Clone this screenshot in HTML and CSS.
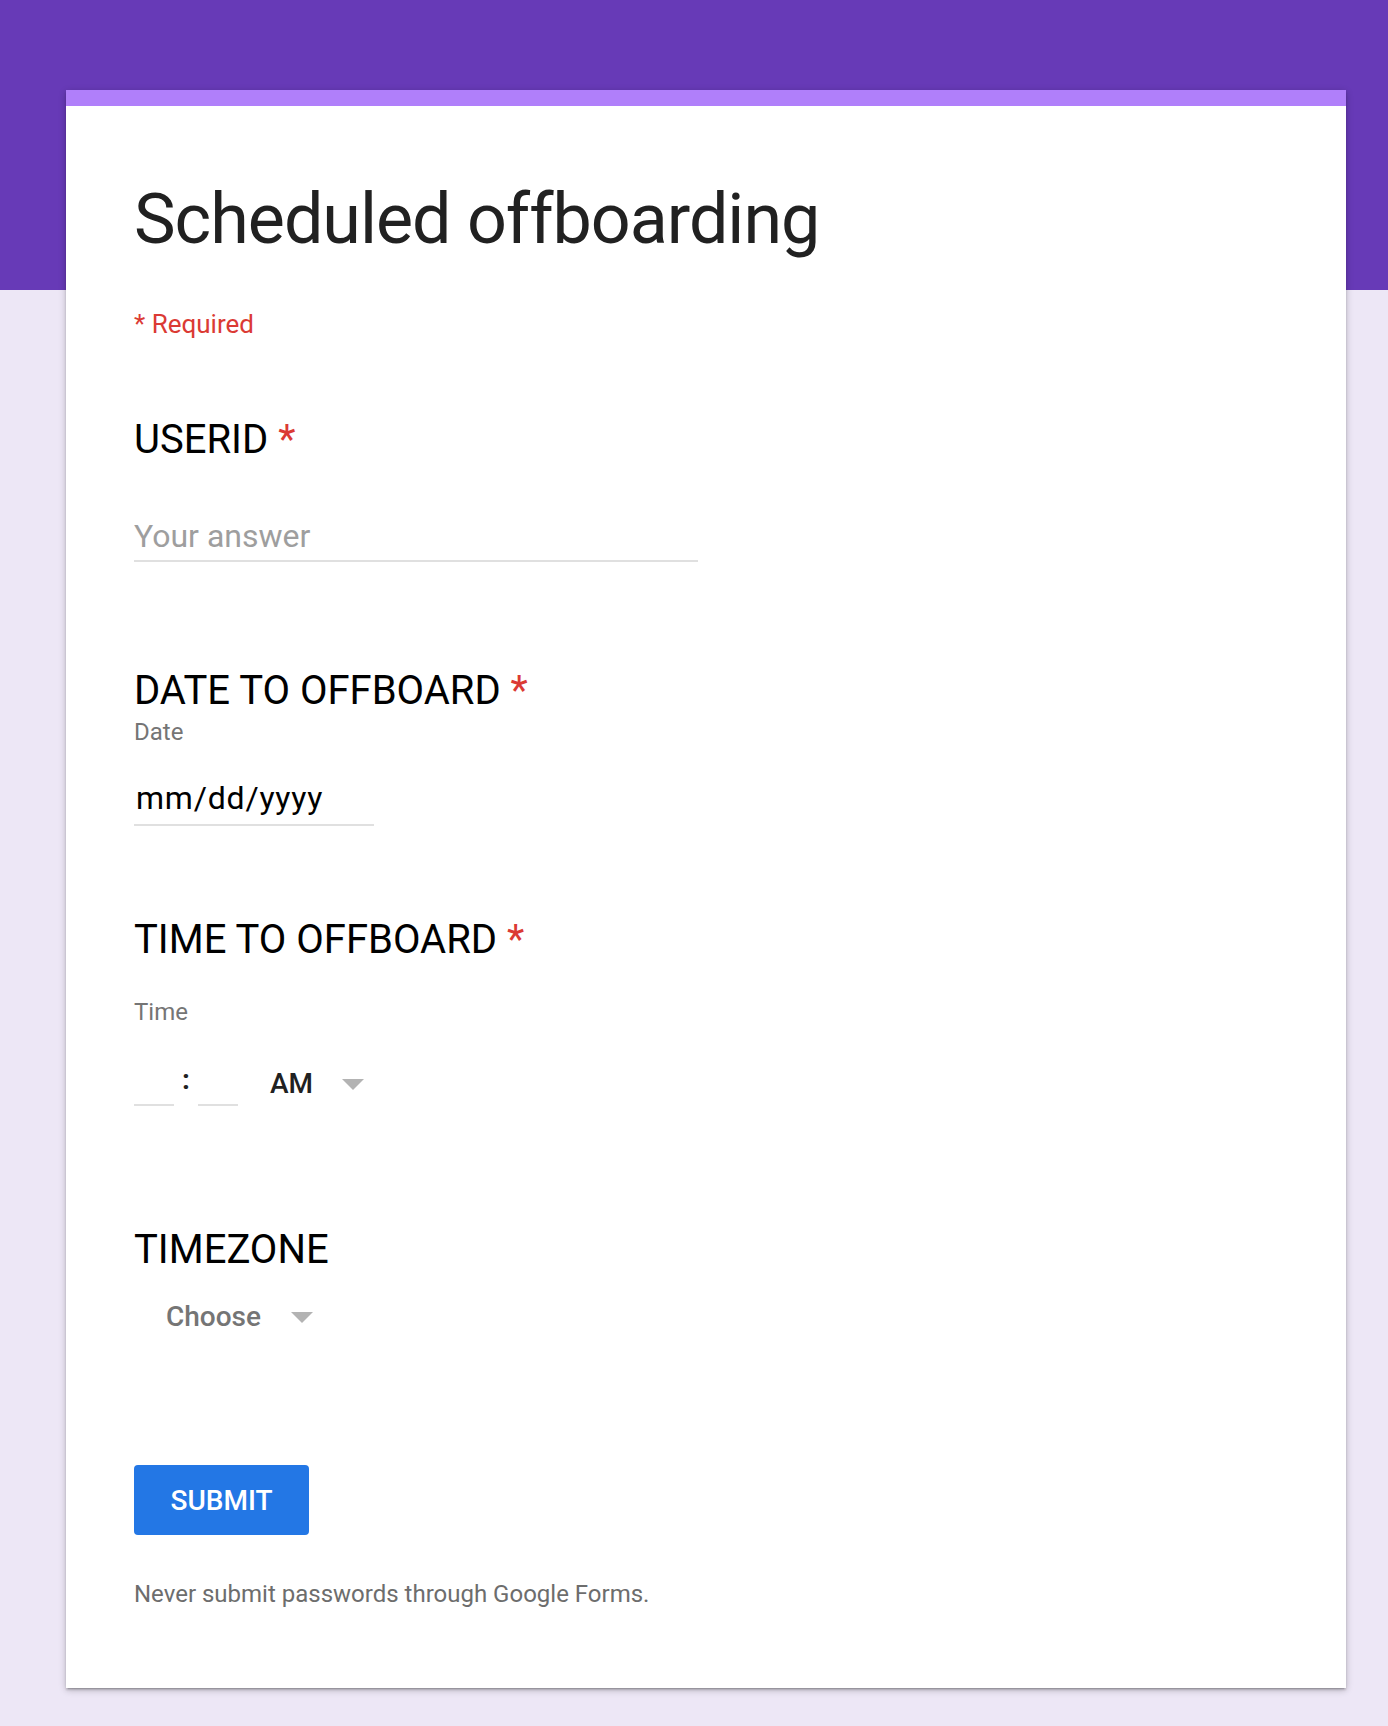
FILE: index.html
```html
<!DOCTYPE html>
<html lang="en">
<head>
  <meta charset="UTF-8" />
  <meta name="viewport" content="width=device-width, initial-scale=1.0" />
  <title>Scheduled offboarding</title>
  <link rel="stylesheet" href="styles.css">
</head>
<body>
  <div class="page">
    <form class="card" onsubmit="return false;">
      <h1 class="form-title">Scheduled offboarding</h1>
      <div class="required-note">* Required</div>

      <div class="question q-userid">
        <div class="q-title">USERID <span class="star">*</span></div>
        <input type="text" class="answer" placeholder="Your answer" />
      </div>

      <div class="question q-date">
        <div class="q-title">DATE TO OFFBOARD <span class="star">*</span></div>
        <div class="q-label">Date</div>
        <div class="date-field">mm/dd/yyyy</div>
      </div>

      <div class="question q-time">
        <div class="q-title">TIME TO OFFBOARD <span class="star">*</span></div>
        <div class="q-label time-label">Time</div>
        <div class="time-row">
          <input type="text" class="time-box" />
          <span class="colon">:</span>
          <input type="text" class="time-box" />
          <div class="ampm">AM <span class="caret"></span></div>
        </div>
      </div>

      <div class="question q-zone">
        <div class="q-title">TIMEZONE</div>
        <div class="choose">Choose <span class="caret"></span></div>
      </div>

      <button type="submit" class="submit">SUBMIT</button>
      <p class="footer-note">Never submit passwords through Google Forms.</p>
    </form>
  </div>
</body>
</html>
```

FILE: styles.css
```css
body {
  margin: 0;
  padding: 0;
  font-family: Roboto, "Liberation Sans", Arial, sans-serif;
  background: linear-gradient(#673ab7 0, #673ab7 290px, #ede7f6 290px);
  background-color: #ede7f6;
  min-height: 1726px;
}

.page {
  padding: 90px 0 0 66px;
}

.card {
  width: 1280px;
  box-sizing: border-box;
  background: white;
  border-top: 16px solid #b07ffa;
  padding: 71px 68px 80px;
  box-shadow: 0 2px 2px rgba(0,0,0,0.14), 0 3px 1px -2px rgba(0,0,0,0.12), 0 2px 7px rgba(0,0,0,0.24);
}

.form-title {
  margin: 0;
  font-size: 70px;
  line-height: 84px;
  font-weight: 400;
  letter-spacing: -1px;
  color: #212121;
}

.required-note {
  margin-top: 47px;
  font-size: 26px;
  line-height: 32px;
  color: #db3a34;
}

.q-title {
  font-size: 40px;
  line-height: 48px;
  color: #000;
}

.star {
  color: #db3a34;
}

.q-label {
  font-size: 24px;
  line-height: 28px;
  color: #757575;
}

.q-userid {
  margin-top: 76px;
}

.answer {
  display: block;
  margin-top: 52px;
  width: 564px;
  box-sizing: border-box;
  border: none;
  border-bottom: 2px solid #e0e0e0;
  outline: none;
  padding: 0 0 4px;
  font-family: inherit;
  font-size: 32px;
  line-height: 40px;
  height: 46px;
  color: #212121;
}

.answer::placeholder {
  color: #9e9e9e;
}

.q-date {
  margin-top: 105px;
}

.q-date .q-label {
  margin-top: 3px;
}

.date-field {
  margin-top: 32px;
  width: 240px;
  padding: 0 0 6px 2px;
  box-sizing: border-box;
  border-bottom: 2px solid #e0e0e0;
  font-size: 32px;
  line-height: 40px;
  letter-spacing: 0.8px;
  color: #000;
}

.q-time {
  margin-top: 90px;
}

.time-label {
  margin-top: 34px;
}

.time-row {
  margin-top: 34px;
  display: flex;
  align-items: flex-start;
  height: 46px;
}

.time-box {
  width: 40px;
  height: 46px;
  box-sizing: border-box;
  border: none;
  border-bottom: 2px solid #e0e0e0;
  outline: none;
  padding: 0;
  font-family: inherit;
  font-size: 28px;
}

.colon {
  width: 24px;
  text-align: center;
  font-size: 28px;
  font-weight: 700;
  line-height: 32px;
  margin-top: 4px;
  color: #212121;
}

.ampm {
  display: flex;
  align-items: center;
  margin: 6px 0 0 32px;
  font-size: 28px;
  line-height: 36px;
  font-weight: 500;
  color: #212121;
}

.caret {
  display: inline-block;
  width: 0;
  height: 0;
  border-left: 11px solid transparent;
  border-right: 11px solid transparent;
  border-top: 11px solid #b3b3b3;
  margin-left: 29px;
}

.q-zone {
  margin-top: 120px;
}

.choose {
  display: flex;
  align-items: center;
  margin: 25px 0 0 32px;
  font-size: 28px;
  line-height: 36px;
  font-weight: 500;
  color: #757575;
}

.choose .caret {
  margin-left: 30px;
}

.submit {
  display: block;
  margin-top: 130px;
  width: 175px;
  height: 70px;
  border: none;
  border-radius: 4px;
  background-color: #2377e5;
  color: white;
  font-family: inherit;
  font-size: 28px;
  font-weight: 500;
  cursor: pointer;
}

.footer-note {
  margin: 45px 0 0;
  font-size: 24px;
  line-height: 28px;
  color: #6d6d6d;
}
```
